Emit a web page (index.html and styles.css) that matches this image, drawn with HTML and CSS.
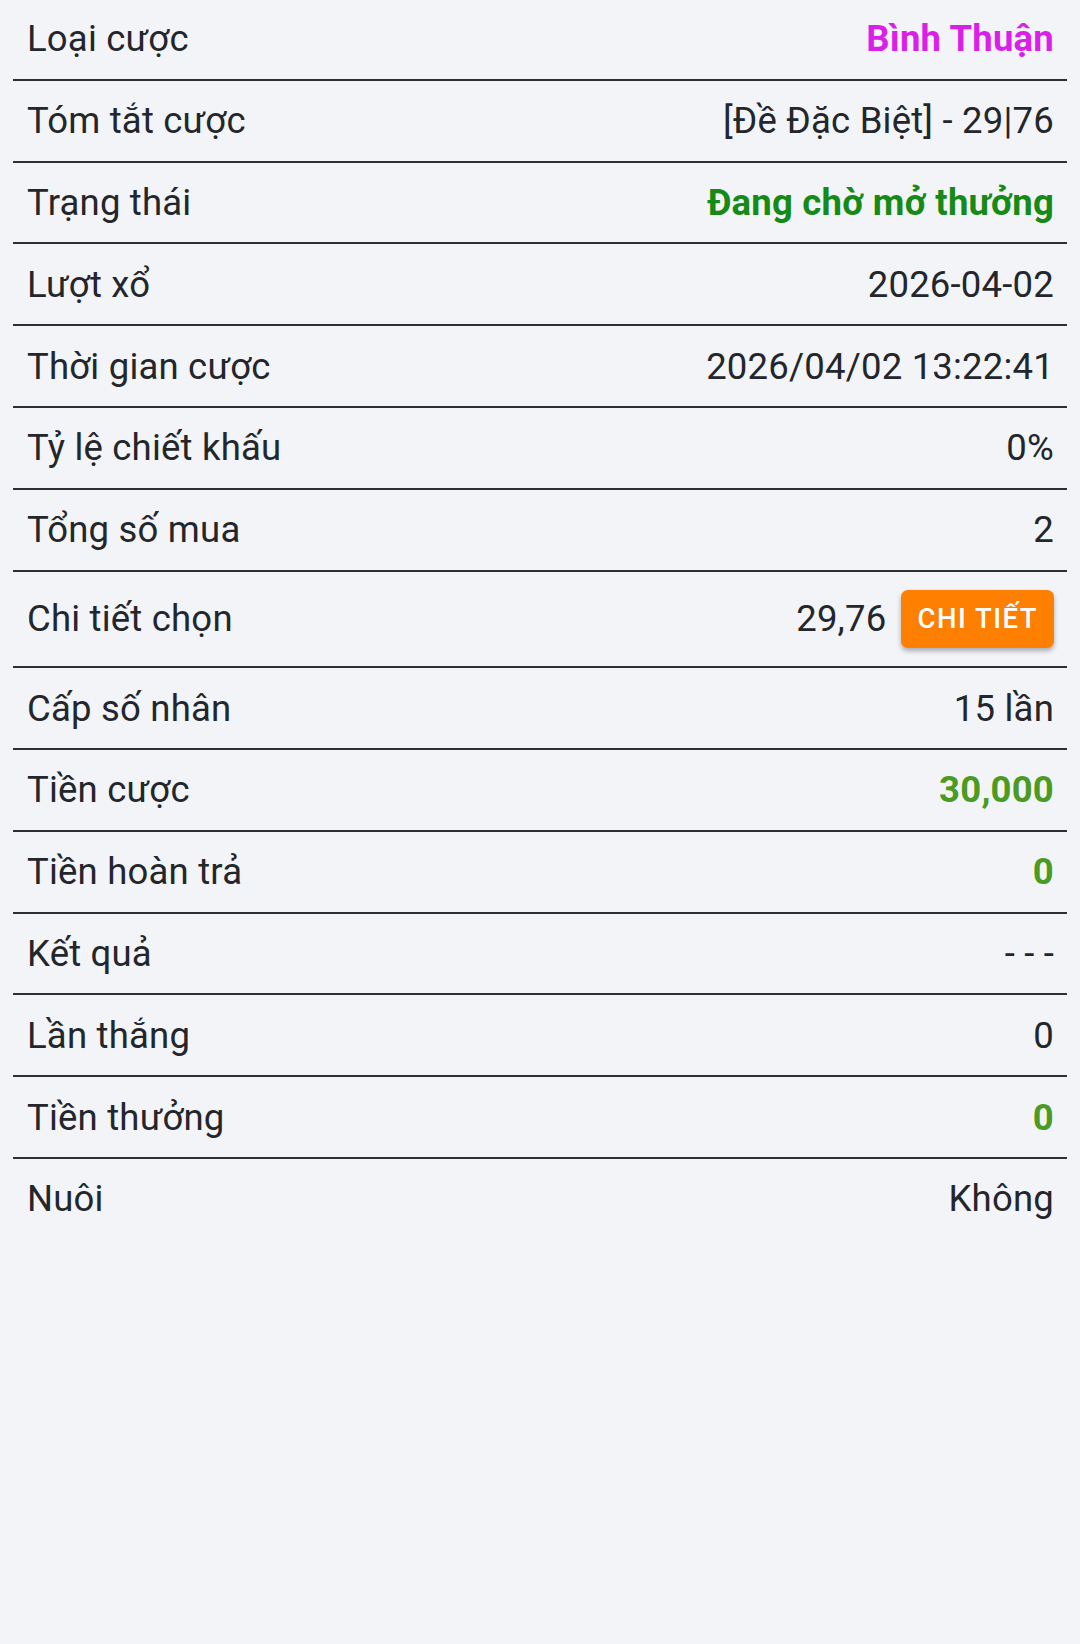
FILE: index.html
```html
<!DOCTYPE html>
<html lang="vi">
<head>
    <meta charset="UTF-8">
    <meta name="viewport" content="width=device-width, initial-scale=1.0">
    <title>Chi tiết cược</title>
    <link rel="stylesheet" href="styles.css">
</head>
<body>

<div class="bet-detail">
    <div class="row">
        <span class="label">Loại cược</span>
        <span class="value magenta">Bình Thuận</span>
    </div>
    <div class="row">
        <span class="label">Tóm tắt cược</span>
        <span class="value">[Đề Đặc Biệt] - 29|76</span>
    </div>
    <div class="row">
        <span class="label">Trạng thái</span>
        <span class="value status">Đang chờ mở thưởng</span>
    </div>
    <div class="row">
        <span class="label">Lượt xổ</span>
        <span class="value">2026-04-02</span>
    </div>
    <div class="row">
        <span class="label">Thời gian cược</span>
        <span class="value">2026/04/02 13:22:41</span>
    </div>
    <div class="row">
        <span class="label">Tỷ lệ chiết khấu</span>
        <span class="value">0%</span>
    </div>
    <div class="row">
        <span class="label">Tổng số mua</span>
        <span class="value">2</span>
    </div>
    <div class="row row-tall">
        <span class="label">Chi tiết chọn</span>
        <span class="value with-btn">29,76 <button class="btn-detail">Chi tiết</button></span>
    </div>
    <div class="row">
        <span class="label">Cấp số nhân</span>
        <span class="value">15 lần</span>
    </div>
    <div class="row">
        <span class="label">Tiền cược</span>
        <span class="value money">30,000</span>
    </div>
    <div class="row">
        <span class="label">Tiền hoàn trả</span>
        <span class="value money">0</span>
    </div>
    <div class="row">
        <span class="label">Kết quả</span>
        <span class="value">- - -</span>
    </div>
    <div class="row">
        <span class="label">Lần thắng</span>
        <span class="value">0</span>
    </div>
    <div class="row">
        <span class="label">Tiền thưởng</span>
        <span class="value money">0</span>
    </div>
    <div class="row">
        <span class="label">Nuôi</span>
        <span class="value">Không</span>
    </div>
</div>

</body>
</html>
```

FILE: styles.css
```css
body {
    font-family: Roboto, "Noto Sans", Arial, sans-serif;
    margin: 0;
    padding: 0 13px;
    background-color: #f3f4f8;
    color: #23262b;
}
.bet-detail {
    margin-top: -1px;
}
.row {
    display: flex;
    justify-content: space-between;
    align-items: center;
    height: 79.8px;
    padding: 0 13px 0 14px;
    border-bottom: 2px solid #2c2f34;
    font-size: 36.5px;
    letter-spacing: 0.2px;
}
.row:last-child {
    border-bottom: none;
}
.row-tall {
    height: 94.7px;
}
.label {
    white-space: nowrap;
}
.value {
    white-space: nowrap;
    text-align: right;
}
.magenta {
    color: #da1fe8;
    font-weight: bold;
}
.status {
    color: #168a16;
    font-weight: bold;
}
.money {
    color: #4b9a22;
    font-weight: bold;
}
.with-btn {
    display: flex;
    align-items: center;
    gap: 15px;
}
.btn-detail {
    height: 58px;
    padding: 0 16px;
    font-family: Roboto, Arial, sans-serif;
    font-size: 27.5px;
    font-weight: 500;
    letter-spacing: 1.5px;
    text-transform: uppercase;
    color: #fff;
    background-color: #ff7f00;
    border: none;
    border-radius: 7px;
    box-shadow: 0 3px 5px rgba(0, 0, 0, 0.3);
    cursor: pointer;
}
```
